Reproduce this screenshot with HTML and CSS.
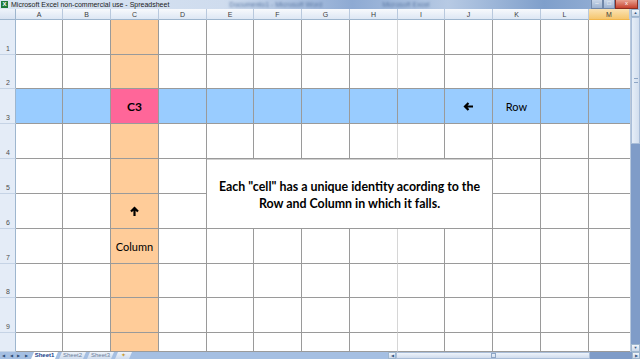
FILE: index.html
```html
<!DOCTYPE html>
<html lang="en">
<head>
    <meta charset="UTF-8">
    <title>Microsoft Excel non-commercial use - Spreadsheet</title>
    <link rel="stylesheet" href="styles.css">
</head>
<body>

<div class="titlebar">
    <span class="app-icon">X</span>
    <span class="title">Microsoft Excel non-commercial use - Spreadsheet</span>
    <span class="blur-text">Documento1 - Microsoft Word</span>
    <span class="blur-text">Microsoft Excel</span>
    <div class="win-buttons">
        <span class="win-btn">&#8211;</span>
        <span class="win-btn">&#9633;</span>
        <span class="win-btn close">x</span>
    </div>
</div>

<div class="workspace">
    <div class="sheet">
        <!-- cabecalho das colunas -->
        <div class="corner"></div>
        <div class="col-head">A</div>
        <div class="col-head">B</div>
        <div class="col-head">C</div>
        <div class="col-head">D</div>
        <div class="col-head">E</div>
        <div class="col-head">F</div>
        <div class="col-head">G</div>
        <div class="col-head">H</div>
        <div class="col-head">I</div>
        <div class="col-head">J</div>
        <div class="col-head">K</div>
        <div class="col-head">L</div>
        <div class="col-head active">M</div>

        <!-- caixa de texto sobre E5:J6 -->
        <div class="note">Each "cell" has a unique identity acording to the<br>Row and Column in which it falls.</div>

        <!-- linha 1 -->
        <div class="row-head">1</div>
        <div class="cell"></div><div class="cell"></div><div class="cell col-c"></div><div class="cell"></div>
        <div class="cell"></div><div class="cell"></div><div class="cell"></div><div class="cell light"></div>
        <div class="cell"></div><div class="cell"></div><div class="cell"></div><div class="cell"></div>
        <div class="cell last"></div>

        <!-- linha 2 -->
        <div class="row-head">2</div>
        <div class="cell"></div><div class="cell"></div><div class="cell col-c"></div><div class="cell"></div>
        <div class="cell"></div><div class="cell"></div><div class="cell"></div><div class="cell light"></div>
        <div class="cell"></div><div class="cell"></div><div class="cell"></div><div class="cell"></div>
        <div class="cell last"></div>

        <!-- linha 3 -->
        <div class="row-head">3</div>
        <div class="cell row-3"></div><div class="cell row-3"></div><div class="cell target">C3</div><div class="cell row-3"></div>
        <div class="cell row-3"></div><div class="cell row-3"></div><div class="cell row-3"></div><div class="cell row-3"></div>
        <div class="cell row-3"></div>
        <div class="cell row-3">
            <svg width="11" height="9" viewBox="0 0 11 9"><path d="M10 4.5H2M5.5 1L2 4.5L5.5 8" fill="none" stroke="#000" stroke-width="2.2"/></svg>
        </div>
        <div class="cell row-3 label">Row</div><div class="cell row-3"></div>
        <div class="cell row-3 last"></div>

        <!-- linha 4 -->
        <div class="row-head">4</div>
        <div class="cell"></div><div class="cell"></div><div class="cell col-c"></div><div class="cell"></div>
        <div class="cell"></div><div class="cell"></div><div class="cell"></div><div class="cell light"></div>
        <div class="cell"></div><div class="cell"></div><div class="cell"></div><div class="cell"></div>
        <div class="cell last"></div>

        <!-- linha 5 -->
        <div class="row-head">5</div>
        <div class="cell"></div><div class="cell"></div><div class="cell col-c"></div><div class="cell"></div>
        <div class="cell"></div><div class="cell"></div>
        <div class="cell last"></div>

        <!-- linha 6 -->
        <div class="row-head">6</div>
        <div class="cell"></div><div class="cell"></div>
        <div class="cell col-c">
            <svg width="9" height="11" viewBox="0 0 9 11"><path d="M4.5 10V2M1 5.5L4.5 2L8 5.5" fill="none" stroke="#000" stroke-width="2.2"/></svg>
        </div>
        <div class="cell"></div>
        <div class="cell"></div><div class="cell"></div>
        <div class="cell last"></div>

        <!-- linha 7 -->
        <div class="row-head">7</div>
        <div class="cell"></div><div class="cell"></div><div class="cell col-c label">Column</div><div class="cell"></div>
        <div class="cell"></div><div class="cell"></div><div class="cell"></div><div class="cell light"></div>
        <div class="cell"></div><div class="cell"></div><div class="cell"></div><div class="cell"></div>
        <div class="cell last"></div>

        <!-- linha 8 -->
        <div class="row-head">8</div>
        <div class="cell"></div><div class="cell"></div><div class="cell col-c"></div><div class="cell"></div>
        <div class="cell"></div><div class="cell"></div><div class="cell"></div><div class="cell light"></div>
        <div class="cell"></div><div class="cell"></div><div class="cell"></div><div class="cell"></div>
        <div class="cell last"></div>

        <!-- linha 9 -->
        <div class="row-head">9</div>
        <div class="cell"></div><div class="cell"></div><div class="cell col-c"></div><div class="cell"></div>
        <div class="cell"></div><div class="cell"></div><div class="cell"></div><div class="cell light"></div>
        <div class="cell"></div><div class="cell"></div><div class="cell"></div><div class="cell"></div>
        <div class="cell last"></div>

        <!-- linha 10 (cortada) -->
        <div class="row-head"></div>
        <div class="cell"></div><div class="cell"></div><div class="cell col-c"></div><div class="cell"></div>
        <div class="cell"></div><div class="cell"></div><div class="cell"></div><div class="cell light"></div>
        <div class="cell"></div><div class="cell"></div><div class="cell"></div><div class="cell"></div>
        <div class="cell last"></div>
    </div>

    <div class="vscroll">
        <div class="arrow-btn">&#9650;</div>
        <div class="vthumb"><span class="grip"></span></div>
        <div class="vtrack"></div>
        <div class="arrow-btn">&#9660;</div>
    </div>
</div>

<div class="tabbar">
    <div class="tab-nav">
        <span>&#9664;</span><span>&#9664;</span><span>&#9654;</span><span>&#9654;</span>
    </div>
    <div class="tab selected">Sheet1</div>
    <div class="tab">Sheet2</div>
    <div class="tab">Sheet3</div>
    <div class="tab new-tab">&#10022;</div>
    <div class="tab-fill"></div>
    <div class="hscroll">
        <div class="arrow-btn h">&#9664;</div>
        <div class="hthumb"><span class="grip"></span></div>
        <div class="htrack"></div>
        <div class="arrow-btn h">&#9654;</div>
    </div>
</div>

</body>
</html>
```

FILE: styles.css
```css
body {
    margin: 0;
    width: 640px;
    height: 359px;
    overflow: hidden;
    background-color: white;
    font-family: "Liberation Sans", Arial, sans-serif;
}

.titlebar {
    height: 9px;
    display: flex;
    align-items: center;
    background: linear-gradient(90deg, #d9e5f3 0%, #cfdcee 35%, #8eaad3 55%, #b7cae4 70%, #7f9fcb 85%, #9fb7da 100%);
    font-size: 7px;
    color: #1b1b1b;
    overflow: hidden;
}

.app-icon {
    width: 7px;
    height: 7px;
    margin: 0 3px 0 1px;
    background-color: #1f7a3b;
    color: white;
    font-size: 6px;
    font-weight: bold;
    line-height: 7px;
    text-align: center;
}

.title {
    white-space: nowrap;
}

.blur-text {
    margin-left: 60px;
    color: #5d7aa5;
    white-space: nowrap;
    filter: blur(0.8px);
}

.win-buttons {
    margin-left: auto;
    display: flex;
    height: 9px;
    margin-right: 2px;
}

.win-btn {
    width: 10px;
    height: 8px;
    background: linear-gradient(#c9d6e8, #9eb3d1);
    border: 1px solid #6f86a8;
    border-top: none;
    color: white;
    font-size: 6px;
    line-height: 7px;
    text-align: center;
}

.win-btn.close {
    width: 21px;
    background: linear-gradient(#e8a191, #c7422e);
    border-color: #8a2d21;
}

.workspace {
    display: flex;
    height: 343px;
}

.sheet {
    display: grid;
    grid-template-columns: 16px 47px 48px 48px 48px 47px 48px 48px 48px 47px 48px 48px 48px 41px;
    grid-template-rows: 11px 35px 34px 35px 35px 35px 35px 35px 34px 35px 19px;
    width: 630px;
    font-family: Lato, "Open Sans", sans-serif;
    font-size: 12px;
    font-weight: bold;
    color: black;
}

.corner {
    background: linear-gradient(#eef3fa, #d7e2f1);
    border-right: 1px solid #9eb6ce;
    border-bottom: 1px solid #9eb6ce;
    box-sizing: border-box;
}

.col-head {
    box-sizing: border-box;
    background: linear-gradient(#f7f9fc, #dde7f4);
    border-right: 1px solid #b9c9dd;
    border-bottom: 1px solid #9eb6ce;
    font-family: "Liberation Sans", Arial, sans-serif;
    font-size: 7px;
    font-weight: normal;
    color: #3c3c3c;
    display: flex;
    align-items: center;
    justify-content: center;
}

.col-head.active {
    background: linear-gradient(#fbe3b4, #f5c66e);
    border-bottom-color: #f2b64d;
}

.row-head {
    box-sizing: border-box;
    background-color: #e4ecf7;
    border-right: 1px solid #9eb6ce;
    border-bottom: 1px solid #c5d3e5;
    font-family: "Liberation Sans", Arial, sans-serif;
    font-size: 7px;
    font-weight: normal;
    color: #4d4d4d;
    display: flex;
    align-items: flex-end;
    padding: 0 0 2px 6px;
}

.cell {
    box-sizing: border-box;
    border-right: 1px solid #9a9a9a;
    border-bottom: 1px solid #9a9a9a;
    display: flex;
    align-items: center;
    justify-content: center;
}

.cell.light {
    border-right: 1px solid #d6d6d6;
}

.cell.last {
    border-right: none;
}

.label {
    font-weight: normal;
    font-size: 11px;
}

.col-c {
    background-color: #ffcc99;
}

.row-3 {
    background-color: #99ccff;
}

.target {
    background-color: #ff6699;
}

.note {
    grid-column: 6 / 12;
    grid-row: 6 / 8;
    box-sizing: border-box;
    border-top: 1px solid #cfcfcf;
    border-right: 1px solid #9a9a9a;
    border-bottom: 1px solid #9a9a9a;
    background-color: white;
    display: flex;
    align-items: center;
    justify-content: center;
    text-align: center;
    font-size: 12.4px;
    line-height: 17px;
    padding-top: 1px;
}

.vscroll {
    width: 10px;
    display: flex;
    flex-direction: column;
    background-color: #e2ebf6;
    border-left: 1px solid #b9c9dd;
    box-sizing: border-box;
}

.arrow-btn {
    height: 8px;
    background: linear-gradient(#f2f6fb, #cbd8ea);
    border: 1px solid #9eb6ce;
    box-sizing: border-box;
    font-size: 4px;
    line-height: 6px;
    color: #3c5a84;
    text-align: center;
}

.vthumb {
    height: 127px;
    background: linear-gradient(90deg, #e6eef8, #d2deee);
    border: 1px solid #a9bdd8;
    box-sizing: border-box;
    display: flex;
    align-items: center;
    justify-content: center;
}

.grip {
    width: 4px;
    height: 3px;
    border-top: 1px solid #8ea6c6;
    border-bottom: 1px solid #8ea6c6;
}

.vtrack {
    flex: 1;
    background-color: #7f9cc8;
}

.tabbar {
    height: 7px;
    display: flex;
    background-color: #a5bfe2;
    font-size: 6px;
    line-height: 7px;
}

.tab-nav {
    width: 30px;
    display: flex;
    justify-content: space-around;
    align-items: center;
    font-size: 4px;
    color: #2f4d78;
}

.tab {
    width: 27px;
    margin-left: 1px;
    background: linear-gradient(#eef3fa, #cfdcee);
    color: #6c7f9b;
    text-align: center;
    clip-path: polygon(3px 0, 100% 0, calc(100% - 3px) 100%, 0 100%);
}

.tab.selected {
    background: white;
    color: #15428b;
    font-weight: bold;
}

.new-tab {
    width: 17px;
    color: #c99a2e;
}

.tab-fill {
    flex: 1;
}

.hscroll {
    width: 252px;
    display: flex;
}

.arrow-btn.h {
    width: 8px;
    height: 7px;
}

.hthumb {
    width: 194px;
    background: linear-gradient(#eef3fa, #cfdcee);
    border: 1px solid #a9bdd8;
    box-sizing: border-box;
    display: flex;
    justify-content: center;
    align-items: center;
}

.hthumb .grip {
    width: 3px;
    height: 3px;
    border: 1px solid #8ea6c6;
}

.htrack {
    flex: 1;
    background-color: #7f9cc8;
}
```
